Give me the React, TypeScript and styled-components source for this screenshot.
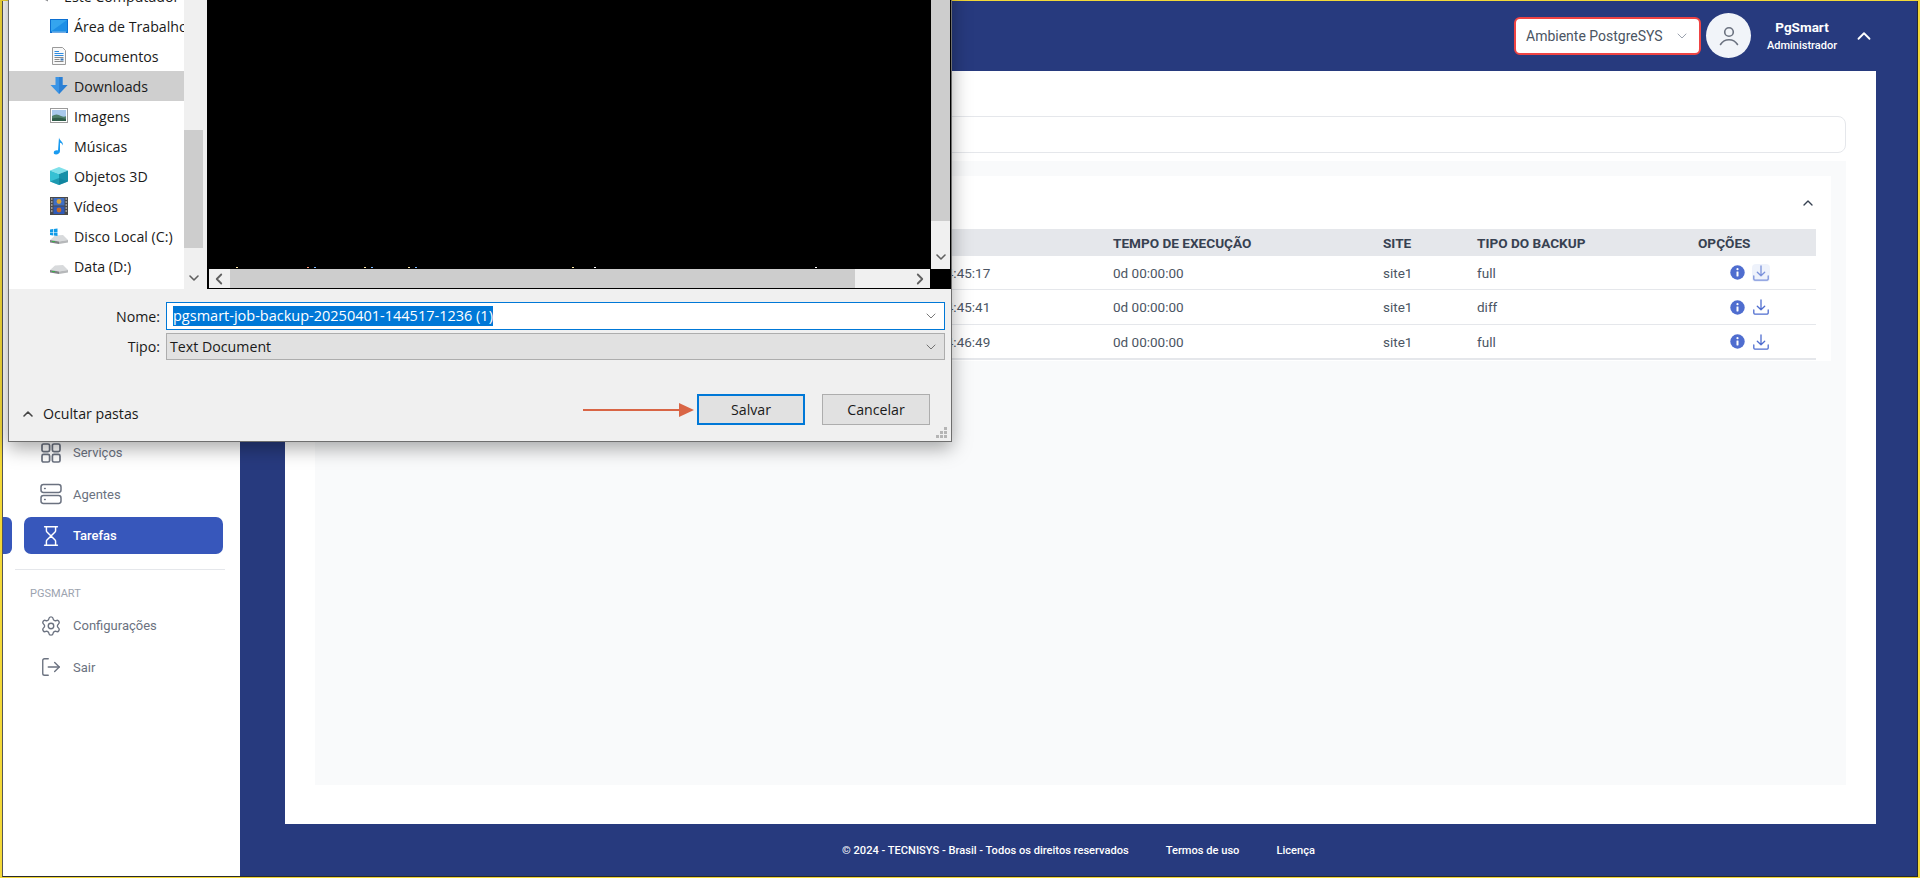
import React from "react";
import styled, { createGlobalStyle } from "styled-components";
import { ChevronDown, ChevronUp, ChevronLeft, ChevronRight, Hourglass, LogOut, Settings } from "lucide-react";

const Global = createGlobalStyle`
  html, body { margin: 0; padding: 0; height: 100%; overflow: hidden; background: #fff; }
  * { box-sizing: border-box; }
  #root { height: 100%; }
  body { font-family: Roboto, "Liberation Sans", sans-serif; }
`;

const Frame = styled.div`
  position: relative;
  width: 1920px;
  height: 878px;
  overflow: hidden;
  background: #f3d838;
  padding: 1px 2px 1px 2px;
`;
const Shell = styled.div`
  display: flex;
  height: 100%;
  border: 1px solid #2a2a2a;
  border-top: 0;
  border-left-color: #555;
`;
const Sidebar = styled.aside`
  width: 237px;
  flex: none;
  background: #fff;
  padding-top: 433px;
  display: flex;
  flex-direction: column;
`;
const NavItem = styled.div<{ $active?: boolean }>`
  position: relative;
  display: flex;
  align-items: center;
  gap: 11px;
  height: 37px;
  width: 199px;
  margin: 0 0 4.5px 21px;
  padding-left: 16px;
  border-radius: 7px;
  font-size: 13px;
  font-weight: ${(p) => (p.$active ? 500 : 400)};
  color: ${(p) => (p.$active ? "#fff" : "#6b7280")};
  background: ${(p) => (p.$active ? "#3757bb" : "transparent")};
  svg { width: 22px; height: 22px; flex: none; }
  ${(p) =>
    p.$active
      ? `&::before { content: ""; position: absolute; left: -21px; top: 0; width: 9px; height: 37px; background: #3757bb; border-radius: 0 6px 6px 0; }`
      : ""}
`;
const SideDivider = styled.div`
  height: 1px;
  width: 210px;
  margin: 10.5px 0 0 12px;
  background: #e5e7eb;
`;
const SideLabel = styled.div`
  margin: 17px 0 7px 27px;
  font-size: 11px;
  line-height: 13px;
  color: #9ca3af;
`;
const Main = styled.div`
  flex: 1;
  display: flex;
  flex-direction: column;
  background: #273a7e;
  min-width: 0;
`;
const Header = styled.header`
  height: 70px;
  flex: none;
  display: flex;
  align-items: center;
  justify-content: flex-end;
  padding: 0 42px 1px 0;
`;
const EnvSelect = styled.div`
  width: 187px;
  height: 38px;
  border: 2px solid #ef4444;
  border-radius: 6px;
  background: #fff;
  display: flex;
  align-items: center;
  justify-content: space-between;
  padding: 0 9px 0 10px;
  font-size: 14px;
  color: #4b5563;
  white-space: nowrap;
  svg { color: #9ca3af; }
`;
const Avatar = styled.div`
  width: 45px;
  height: 45px;
  margin-left: 5px;
  border-radius: 50%;
  background: #f1f4f9;
  display: flex;
  align-items: center;
  justify-content: center;
`;
const UserBlock = styled.div`
  width: 102px;
  text-align: center;
  color: #fff;
`;
const UserName = styled.div`
  font-size: 13.5px;
  font-weight: 700;
  line-height: 19px;
`;
const UserRole = styled.div`
  font-size: 11px;
  font-weight: 500;
  line-height: 17px;
`;
const Content = styled.main`
  flex: 1;
  margin: 0 41px 0 45px;
  background: #fff;
  padding: 45px 30px 39px;
  display: flex;
  flex-direction: column;
  gap: 8px;
`;
const SearchBox = styled.div`
  height: 37px;
  flex: none;
  background: #fff;
  border: 1px solid #e5e7eb;
  border-radius: 8px;
`;
const Panel = styled.section`
  flex: 1;
  background: #f9fafb;
  padding: 15px;
`;
const Card = styled.div`
  background: #fff;
  padding: 0 15px;
  height: 185px;
`;
const CardHead = styled.div`
  height: 53px;
  display: flex;
  align-items: center;
  justify-content: flex-end;
  color: #374151;
`;
const columns = "518px 250px 270px 94px 221px 117px";
const TableHead = styled.div`
  display: grid;
  grid-template-columns: ${columns};
  height: 27px;
  align-items: center;
  background: #e5e7eb;
  font-size: 13.6px;
  font-weight: 700;
  color: #374151;
`;
const TableRow = styled.div<{ $last?: boolean; $tall?: boolean }>`
  display: grid;
  grid-template-columns: ${columns};
  height: ${(p) => (p.$tall ? 35 : 34)}px;
  align-items: center;
  border-bottom: ${(p) => (p.$last ? 2 : 1)}px solid #e5e7eb;
  font-size: 13.5px;
  color: #4b5563;
`;
const Options = styled.div`
  display: flex;
  align-items: center;
  gap: 7px;
  padding-left: 32px;
`;
const IconBtn = styled.span<{ $hover?: boolean }>`
  display: flex;
  align-items: center;
  justify-content: center;
  width: 18px;
  height: 18px;
  border-radius: 4px;
  background: ${(p) => (p.$hover ? "#e9eefa" : "transparent")};
  opacity: ${(p) => (p.$hover ? 0.75 : 1)};
`;
const Footer = styled.footer`
  height: 52px;
  flex: none;
  display: flex;
  align-items: center;
  justify-content: center;
  gap: 37px;
  font-size: 11.1px;
  font-weight: 500;
  color: #fff;
`;

/* Windows save dialog */
const Dialog = styled.div`
  position: absolute;
  left: 8px;
  top: -20px;
  width: 944px;
  height: 462px;
  background: #f0f0f0;
  border: 1px solid #6e6e6e;
  box-shadow: 0 6px 18px rgba(0, 0, 0, 0.35);
  font-family: "Open Sans", "Liberation Sans", sans-serif;
  font-size: 14.2px;
  color: #1a1a1a;
  display: flex;
  flex-direction: column;
`;
const DialogBody = styled.div`
  display: flex;
  height: 308px;
  flex: none;
`;
const FolderNav = styled.nav`
  width: 175px;
  flex: none;
  background: #fff;
  overflow: hidden;
`;
const FolderRow = styled.div<{ $selected?: boolean; $root?: boolean }>`
  display: flex;
  align-items: center;
  gap: 6px;
  height: 30px;
  padding-left: ${(p) => (p.$root ? 31 : 41)}px;
  white-space: nowrap;
  background: ${(p) => (p.$selected ? "#cfcfcf" : "transparent")};
  svg { width: 18px; height: 18px; flex: none; }
`;
const NavScroll = styled.div`
  width: 19px;
  flex: none;
  background: #f0f0f0;
  padding-top: 149px;
  display: flex;
  flex-direction: column;
  align-items: center;
  color: #606060;
`;
const Thumb = styled.div`
  width: 100%;
  height: 118px;
  background: #cdcdcd;
  margin-bottom: 22px;
  flex: none;
`;
const Pane = styled.div`
  margin-left: 4px;
  flex: 1;
  background: #000;
  display: flex;
  flex-direction: column;
`;
const PaneTop = styled.div`
  display: flex;
  height: 288px;
  flex: none;
`;
const BlackArea = styled.div`
  position: relative;
  flex: 1;
`;
const Specks = styled.svg`
  position: absolute;
  left: 0;
  bottom: 0;
  width: 724px;
  height: 2px;
`;
const PaneScroll = styled.div`
  width: 19px;
  margin-right: 1px;
  background: #f0f0f0;
  display: flex;
  flex-direction: column;
  align-items: center;
  color: #606060;
`;
const PaneThumb = styled.div`
  width: 100%;
  height: 240px;
  background: #cdcdcd;
  margin-bottom: 28px;
  flex: none;
`;
const PaneBottom = styled.div`
  flex: 1;
  display: flex;
  padding: 0 21px 1px 2px;
`;
const HScroll = styled.div`
  flex: 1;
  background: #f0f0f0;
  display: flex;
  align-items: center;
  color: #606060;
  svg { flex: none; margin: 0 1px; }
`;
const HThumb = styled.div`
  width: 625px;
  height: 100%;
  background: #cdcdcd;
  margin: 0 55px 0 1px;
  flex: none;
`;
const Form = styled.div`
  position: relative;
  flex: 1;
  padding: 13px 6px 0 0;
  display: flex;
  flex-direction: column;
`;
const FieldRow = styled.div`
  display: grid;
  grid-template-columns: 151px 1fr;
  column-gap: 6px;
  align-items: center;
  margin-bottom: 3px;
`;
const FieldLabel = styled.label`
  text-align: right;
`;
const NameInput = styled.div`
  height: 28px;
  background: #fff;
  border: 1px solid #0078d7;
  display: flex;
  align-items: center;
  justify-content: space-between;
  padding: 0 5px 0 6px;
  color: #555;
`;
const Selected = styled.span`
  background: #0078d7;
  color: #fff;
  font-size: 14.5px;
  line-height: 20px;
  white-space: nowrap;
`;
const TypeSelect = styled.div`
  height: 27px;
  background: #e1e1e1;
  border: 1px solid #adadad;
  display: flex;
  align-items: center;
  justify-content: space-between;
  padding: 0 5px 0 3px;
  color: #555;
`;
const TypeText = styled.span`
  color: #1a1a1a;
`;
const Actions = styled.div`
  display: flex;
  align-items: center;
  margin-top: 31px;
  padding: 0 15px 0 11px;
`;
const HideFolders = styled.div`
  display: flex;
  align-items: center;
  gap: 7px;
  margin: 8px auto 0 0;
  svg { color: #444; }
`;
const DialogButton = styled.button<{ $primary?: boolean }>`
  width: 108px;
  height: 31px;
  margin-left: ${(p) => (p.$primary ? 3 : 17)}px;
  padding: 0;
  background: #e1e1e1;
  border: ${(p) => (p.$primary ? "2px solid #0078d7" : "1px solid #adadad")};
  font: inherit;
  color: #1a1a1a;
`;
const Grip = styled.svg`
  position: absolute;
  right: 3px;
  bottom: 2px;
  width: 12px;
  height: 12px;
`;

const IconGrid = () => (
  <svg viewBox="0 0 22 22" fill="none" stroke="#6b7280" strokeWidth="1.7">
    <rect x="2" y="2" width="7.6" height="7.6" rx="1.6" />
    <rect x="12.4" y="2" width="7.6" height="7.6" rx="1.6" />
    <rect x="2" y="12.4" width="7.6" height="7.6" rx="1.6" />
    <rect x="12.4" y="12.4" width="7.6" height="7.6" rx="1.6" />
  </svg>
);
const IconServer = () => (
  <svg viewBox="0 0 22 22" fill="none" stroke="#6b7280" strokeWidth="1.5">
    <rect x="1" y="1.5" width="20" height="8" rx="2.4" />
    <rect x="1" y="12.5" width="20" height="8" rx="2.4" />
    <path d="M4.6 5.5h.6M4.6 16.5h.6" strokeLinecap="round" />
  </svg>
);
const IconUser = () => (
  <svg width="24" height="24" viewBox="0 0 24 24" fill="none" stroke="#6b7280" strokeWidth="1.6" strokeLinecap="round">
    <circle cx="12" cy="8" r="4.3" />
    <path d="M3.5 20.5c2-3.2 5-4.8 8.5-4.8s6.5 1.6 8.5 4.8" />
  </svg>
);
const IconInfo = () => (
  <svg width="15" height="15" viewBox="0 0 15 15">
    <circle cx="7.5" cy="7.5" r="7.2" fill="#4f6dcf" />
    <rect x="6.5" y="6.4" width="2" height="5" rx="0.4" fill="#fff" />
    <circle cx="7.5" cy="4.2" r="1.1" fill="#fff" />
  </svg>
);
const IconDownload = () => (
  <svg width="16" height="16" viewBox="0 0 16 16" fill="none" stroke="#4f6dcf" strokeWidth="1.3" strokeLinecap="round" strokeLinejoin="round">
    <path d="M8 1v9.5M4.3 7.2 8 10.8l3.7-3.6" />
    <path d="M.8 11v3.1c0 .6.4 1 1 1h12.4c.6 0 1-.4 1-1V11" />
  </svg>
);

const WinPC = () => (
  <svg viewBox="0 0 18 18">
    <path d="M2 2l12-1 3 3-13 1z" fill="#d4d7da" />
    <path d="M0 9l11-2 7 3-10 3z" fill="#c3c6c9" />
    <path d="M0 9l8 4v1.5L0 10.5z" fill="#8b8d90" />
  </svg>
);
const WinDesktop = () => (
  <svg viewBox="0 0 18 18">
    <rect x="0" y="2" width="18" height="14" fill="#0c6fd1" />
    <rect x="1" y="3" width="16" height="11.5" fill="#35a5ee" />
    <path d="M1 14.5 17 3v11.5z" fill="#1e8fe6" />
    <path d="M2 15.2h14" stroke="#fff" strokeWidth=".6" />
  </svg>
);
const WinDocs = () => (
  <svg viewBox="0 0 18 18">
    <path d="M2.5.5h10l3 3v14h-13z" fill="#f8f8f8" stroke="#9a9a9a" />
    <path d="M4.5 4.5H9M4.5 6.5h9M4.5 8.5h9" stroke="#2d8be0" strokeWidth="1" />
    <path d="M4.5 10.5h9M4.5 12.5h5M4.5 14.5h9" stroke="#8a8a8a" strokeWidth="1" />
    <rect x="10.5" y="11.5" width="3" height="2" fill="#3a78b8" />
  </svg>
);
const WinDownloads = () => (
  <svg viewBox="0 0 18 18">
    <path d="M5.5 0h7v8H17.5L9 17 .5 8h5z" fill="#3a94e5" />
    <path d="M9 0h3.5v8H17.5L9 17z" fill="#2b7fd4" />
  </svg>
);
const WinPictures = () => (
  <svg viewBox="0 0 18 18">
    <rect x=".5" y="1.5" width="17" height="14" fill="#fff" stroke="#9b9b9b" />
    <rect x="2" y="3" width="14" height="11" fill="#a9c9ec" />
    <path d="M2 9c3-2 6-2 9 0 2 .8 3.5 .8 5 .3V14H2z" fill="#4f7f6a" />
    <path d="M2 11.5c4-1 9-1 14 .5V14H2z" fill="#2f5d4a" />
  </svg>
);
const WinMusic = () => (
  <svg viewBox="0 0 18 18">
    <path d="M9 .5c.3 3 4.5 4 4 8-.6-1.6-2-2.6-3-2.8V14c0 2-2 3.5-4 3.5-1.6 0-2.5-1-2.2-2.3.3-1.3 2-2.2 4.2-1.7z" fill="#1a9bf0" />
  </svg>
);
const Win3D = () => (
  <svg viewBox="0 0 18 18">
    <path d="M9 0l9 3.5L9 7 0 3.5z" fill="#7fe0ea" />
    <path d="M0 3.5 9 7v11l-9-3.5z" fill="#36c0d3" />
    <path d="M18 3.5 9 7v11l9-3.5z" fill="#1590a8" />
    <path d="M0 14.5 9 11l9 3.5L9 18z" fill="#0d7f9a" opacity=".6" />
  </svg>
);
const WinVideo = () => (
  <svg viewBox="0 0 18 18">
    <rect x="0" y="0" width="18" height="18" fill="#4a4a4a" />
    <rect x="3.5" y="1" width="11" height="7.5" fill="#3f6fc4" />
    <rect x="3.5" y="9.5" width="11" height="7.5" fill="#2f5ab8" />
    <circle cx="9" cy="4.5" r="2.4" fill="#d9a53a" />
    <circle cx="9" cy="13" r="2.4" fill="#c46a2a" />
    <path d="M1 2h1.5M1 5h1.5M1 8h1.5M1 11h1.5M1 14h1.5M15.5 2H17M15.5 5H17M15.5 8H17M15.5 11H17M15.5 14H17" stroke="#e8e8e8" strokeWidth="1.2" />
  </svg>
);
const WinDisk = ({ logo }: { logo?: boolean }) => (
  <svg viewBox="0 0 18 18">
    <path d="M5 8.5 13 8l5 5-9 1.5L0 13z" fill="#d8dadc" />
    <path d="M0 13l9 1.5V17L0 15.5z" fill="#7d7f82" />
    <path d="M9 14.5 18 13v2.5L9 17z" fill="#b6b8ba" />
    <rect x="2" y="14" width="3" height="1" fill="#38b04a" />
    {logo && <path d="M0 2.5l3-.4v2.8H0zM3.7 2l3.8-.5v3.4H3.7zM0 5.6h3v2.8l-3-.4zM3.7 5.6h3.8V9l-3.8-.5z" fill="#0f9be8" />}
  </svg>
);

const folders: [string, React.ReactNode][] = [
  ["Área de Trabalho", <WinDesktop key="a" />],
  ["Documentos", <WinDocs key="b" />],
  ["Downloads", <WinDownloads key="c" />],
  ["Imagens", <WinPictures key="d" />],
  ["Músicas", <WinMusic key="e" />],
  ["Objetos 3D", <Win3D key="f" />],
  ["Vídeos", <WinVideo key="g" />],
  ["Disco Local (C:)", <WinDisk key="h" logo />],
  ["Data (D:)", <WinDisk key="i" />],
];

const rows: [string, string][] = [
  ["01/04/2025 14:45:17", "full"],
  ["01/04/2025 14:45:41", "diff"],
  ["01/04/2025 14:46:49", "full"],
];

const speckColors: [number, string][] = [
  [29, "#ffe9a8"],
  [100, "#ff9a7a"],
  [107, "#7ab8ff"],
  [157, "#ffe9a8"],
  [164, "#7ab8ff"],
  [201, "#ffe9a8"],
  [208, "#7ab8ff"],
  [365, "#ffe9a8"],
  [387, "#fff"],
  [608, "#fff"],
];

export default function App() {
  return (
    <>
      <Global />
      <Frame>
        <Shell>
          <Sidebar>
            <NavItem><IconGrid />Serviços</NavItem>
            <NavItem><IconServer />Agentes</NavItem>
            <NavItem $active><Hourglass strokeWidth={1.6} />Tarefas</NavItem>
            <SideDivider />
            <SideLabel>PGSMART</SideLabel>
            <NavItem><Settings strokeWidth={1.5} />Configurações</NavItem>
            <NavItem><LogOut strokeWidth={1.5} />Sair</NavItem>
          </Sidebar>
          <Main>
            <Header>
              <EnvSelect>
                Ambiente PostgreSYS
                <ChevronDown size={16} strokeWidth={1.5} />
              </EnvSelect>
              <Avatar><IconUser /></Avatar>
              <UserBlock>
                <UserName>PgSmart</UserName>
                <UserRole>Administrador</UserRole>
              </UserBlock>
              <ChevronUp size={22} color="#fff" strokeWidth={2} />
            </Header>
            <Content>
              <SearchBox />
              <Panel>
                <Card>
                  <CardHead><ChevronUp size={16} strokeWidth={2} /></CardHead>
                  <TableHead>
                    <span />
                    <span />
                    <span>TEMPO DE EXECUÇÃO</span>
                    <span>SITE</span>
                    <span>TIPO DO BACKUP</span>
                    <span>OPÇÕES</span>
                  </TableHead>
                  {rows.map(([time, kind], i) => (
                    <TableRow key={time} $tall={i > 0} $last={i === 2}>
                      <span />
                      <span>{time}</span>
                      <span>0d 00:00:00</span>
                      <span>site1</span>
                      <span>{kind}</span>
                      <Options>
                        <IconInfo />
                        <IconBtn $hover={i === 0}><IconDownload /></IconBtn>
                      </Options>
                    </TableRow>
                  ))}
                </Card>
              </Panel>
            </Content>
            <Footer>
              <span>© 2024 - TECNISYS - Brasil - Todos os direitos reservados</span>
              <span>Termos de uso</span>
              <span>Licença</span>
            </Footer>
          </Main>
        </Shell>

        <Dialog>
          <DialogBody>
            <FolderNav>
              <FolderRow $root><WinPC />Este Computador</FolderRow>
              {folders.map(([name, icon]) => (
                <FolderRow key={name} $selected={name === "Downloads"}>{icon}{name}</FolderRow>
              ))}
            </FolderNav>
            <NavScroll>
              <Thumb />
              <ChevronDown size={16} strokeWidth={2.4} />
            </NavScroll>
            <Pane>
              <PaneTop>
                <BlackArea>
                  <Specks viewBox="0 0 724 2">
                    {speckColors.map(([x, c]) => (
                      <rect key={x} x={x} y="0" width="2" height="1" fill={c} />
                    ))}
                  </Specks>
                </BlackArea>
                <PaneScroll>
                  <PaneThumb />
                  <ChevronDown size={16} strokeWidth={2.4} />
                </PaneScroll>
              </PaneTop>
              <PaneBottom>
                <HScroll>
                  <ChevronLeft size={18} strokeWidth={2.4} />
                  <HThumb />
                  <ChevronRight size={18} strokeWidth={2.4} />
                </HScroll>
              </PaneBottom>
            </Pane>
          </DialogBody>
          <Form>
            <FieldRow>
              <FieldLabel>Nome:</FieldLabel>
              <NameInput>
                <Selected>pgsmart-job-backup-20250401-144517-1236 (1)</Selected>
                <ChevronDown size={16} strokeWidth={1.2} />
              </NameInput>
            </FieldRow>
            <FieldRow>
              <FieldLabel>Tipo:</FieldLabel>
              <TypeSelect>
                <TypeText>Text Document</TypeText>
                <ChevronDown size={16} strokeWidth={1.2} />
              </TypeSelect>
            </FieldRow>
            <Actions>
              <HideFolders>
                <ChevronUp size={16} strokeWidth={2.4} />
                Ocultar pastas
              </HideFolders>
              <svg width="111" height="14" viewBox="0 0 111 14">
                <path d="M0 7h96" stroke="#d96545" strokeWidth="2" />
                <path d="M96 0l15 7-15 7z" fill="#d96545" />
              </svg>
              <DialogButton $primary>Salvar</DialogButton>
              <DialogButton>Cancelar</DialogButton>
            </Actions>
            <Grip viewBox="0 0 12 12" fill="#b5b5b5">
              <rect x="8" y="0" width="3" height="3" />
              <rect x="4" y="4" width="3" height="3" />
              <rect x="8" y="4" width="3" height="3" />
              <rect x="0" y="8" width="3" height="3" />
              <rect x="4" y="8" width="3" height="3" />
              <rect x="8" y="8" width="3" height="3" />
            </Grip>
          </Form>
        </Dialog>
      </Frame>
    </>
  );
}
